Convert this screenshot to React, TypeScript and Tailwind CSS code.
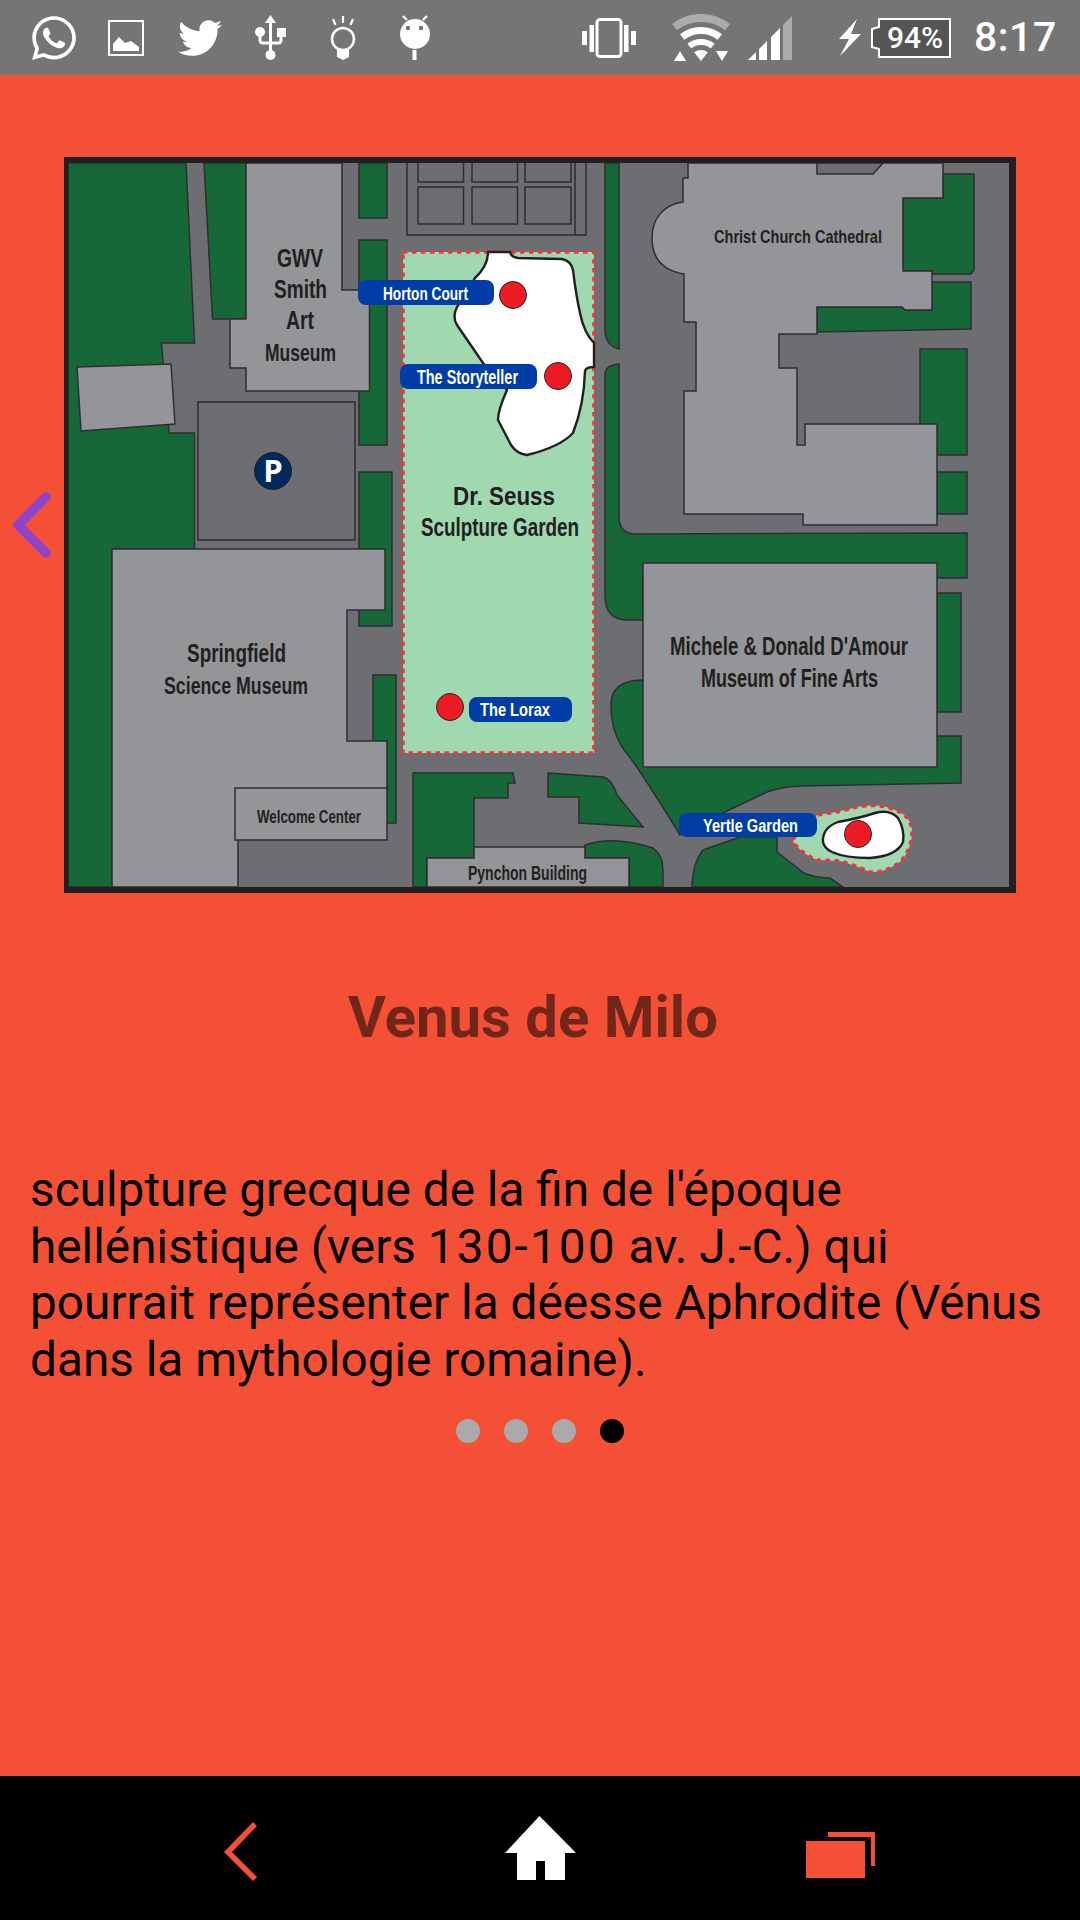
import { FaTwitter, FaWhatsapp } from "react-icons/fa";

const GREEN = "#176838";
const BUILDING = "#939598";
const LINE = "#2f2d31";

const MapText = ({ x, w, y, size, fill = "#231f20", children }: { x: number; w: number; y: number; size: number; fill?: string; children: string }) => (
  <text x={x} y={y} fontSize={size} fontWeight="700" fill={fill} fontFamily="'Liberation Sans', sans-serif" textLength={w} lengthAdjust="spacingAndGlyphs">
    {children}
  </text>
);

const Pill = ({ x, y, w, h }: { x: number; y: number; w: number; h: number }) => <rect x={x} y={y} width={w} height={h} rx={8} fill="#003da6" />;

const Dot = ({ x, y }: { x: number; y: number }) => <circle cx={x} cy={y} r={13.5} fill="#ed1c24" stroke="#231f20" strokeWidth={1} />;

const CampusMap = () => (
  <svg viewBox="64 157 952 736" className="block w-[952px] h-[736px] ml-[64px]">
    <rect x={64} y={157} width={952} height={736} fill="#6d6e71" />
    <g fill={GREEN} stroke={LINE} strokeWidth={1.5}>
      <path d="M68 163L186 163L194.5 343L161.5 343L169 433L194.5 433L194.5 549L112 549L112 887L68 887Z" />
      <path d="M204 163L212.5 319L246 319L246 163Z" />
      <rect x={359} y={163} width={28} height={55} />
      <rect x={359} y={240} width={28} height={205} />
      <rect x={359} y={472} width={33} height={154} />
      <rect x={373} y={675} width={23} height={148} />
      <path d="M413 773L513 773L515 783L508 783L508 798L474 798L474 858L427 858L427 887L413 887Z" />
      <path d="M548 773L603 777Q612 779 617 795L643 827L579 823L579 797L548 797Z" />
      <path d="M585 845Q613 835 653 848Q663 855 663 870L663 887L629 887L629 858L585 858Z" />
      <path d="M605 163L619 163L619 349Q605 345 605 330Z" />
      <path d="M605 375Q605 365 619 364L619 517Q619 534 636 534L967 533L967 578L900 578L643 578L643 620L627 620Q605 620 605 595Z" />
      <path d="M643 680Q611 680 611 705Q611 735 628 755Q640 770 680 835L725 812L767 792Q780 787 800 786L961 783L961 736L900 736L900 680Z" />
      <rect x={937} y={593} width={24} height={119} />
      <path d="M692 887Q693 862 703 850L740 837L777 837L777 852L800 870Q807 877 830 878L843 887Z" />
      <path d="M943 174L974 174L974 270L971 274L932 274L932 271L903 271L903 198L943 198Z" />
      <path d="M932 282L971 282L971 329L817 332L817 307L902 307L905 310L932 310Z" />
      <rect x={920} y={349} width={47} height={106} />
      <rect x={937} y={472} width={30} height={42} />
    </g>
    <g fill={BUILDING} stroke={LINE} strokeWidth={1.5}>
      <path d="M246 163L342 163L342 290L369.5 290L369.5 391L246 391L246 368L230 368L230 319L246 319Z" />
      <path d="M77 367L171 364L175 424L81 431Z" />
      <path d="M112 549L385 549L385 610L347 610L347 741L387 741L387 790L238 790L238 887L112 887Z" />
      <rect x={235} y={788} width={152} height={52} />
      <path d="M474 847L585 847L585 858L629 858L629 887L427 887L427 858L474 858Z" />
      <rect x={643} y={563} width={294} height={204} />
      <path d="M688 163L943 163L943 198L903 198L903 271L932 271L932 310L905 310L902 307L817 307L817 334L779 334L779 368L797 368L797 445L805 445L805 424L937 424L937 525L803 525L803 514L684 514L684 391L696 391L696 322L684 322L684 274C660 270 652 255 652 238C652 220 662 205 683 202L683 178L688 178Z" />
    </g>
    <g fill="#6d6e71" stroke={LINE} strokeWidth={1.5}>
      <path d="M817 163L817 174L873 174L883 163Z" />
      <rect x={198} y={402} width={157} height={138} />
      <rect x={407} y={157} width={179} height={78} />
      <path d="M575 157L575 235" fill="none" />
      <rect x={418} y={157} width={45.5} height={25} />
      <rect x={472} y={157} width={45.5} height={25} />
      <rect x={525} y={157} width={46} height={25} />
      <rect x={418} y={187} width={45.5} height={37} />
      <rect x={472} y={187} width={45.5} height={37} />
      <rect x={525} y={187} width={46} height={37} />
    </g>
    <circle cx={273} cy={471} r={18.5} fill="#002a5c" stroke="#231f20" strokeWidth={1} />
    <text x={273} y={482} textAnchor="middle" fontSize={31} fontWeight="700" fill="#ffffff" fontFamily="'Open Sans', sans-serif">P</text>

    <rect x={403} y={252} width={191} height={501} fill="#a0d9b0" stroke="#ef3340" strokeWidth={3.5} strokeDasharray="4.5 4.5" />
    <path d="M488 252L510 252Q511 257 518 258L562 259Q571 261 573 270Q576 295 580 313Q584 333 594 343L594 367Q586 367 585 371Q584 405 573 433Q560 447 527 455Q517 454 511 445L498 420Q498 410 507 390L483 363L457 325Q452 317 457 307L475 278Q488 266 488 252Z" fill="#ffffff" stroke="#231f20" strokeWidth={2.4} />
    <path d="M792 840L817 815Q840 812 857 807Q880 803 895 810Q910 815 912 830Q912 850 900 862Q885 873 870 872Q855 865 840 861L817 860Q800 853 792 840Z" fill="#a0d9b0" stroke="#ef3340" strokeWidth={3.5} strokeDasharray="4.5 4.5" />
    <path d="M823 842Q822 828 838 822Q860 818 875 813Q890 809 898 818Q905 830 903 842Q897 856 870 858Q845 858 832 852Q824 848 823 842Z" fill="#ffffff" stroke="#231f20" strokeWidth={2.4} />

    <Pill x={358} y={280} w={136} h={25} />
    <Pill x={400} y={364} w={137} h={25} />
    <Pill x={469} y={697} w={103} h={25} />
    <Pill x={679} y={813} w={138} h={24} />
    <Dot x={513} y={295} />
    <Dot x={558} y={376} />
    <Dot x={450} y={707} />
    <Dot x={858} y={834} />

    <MapText x={383} w={85} y={300} size={18} fill="#ffffff">Horton Court</MapText>
    <MapText x={417} w={101} y={384} size={20} fill="#ffffff">The Storyteller</MapText>
    <MapText x={480} w={70} y={716} size={19} fill="#ffffff">The Lorax</MapText>
    <MapText x={703} w={95} y={832} size={18} fill="#ffffff">Yertle Garden</MapText>

    <MapText x={277} w={46} y={267} size={25}>GWV</MapText>
    <MapText x={274} w={53} y={298} size={25}>Smith</MapText>
    <MapText x={286} w={28} y={329} size={25}>Art</MapText>
    <MapText x={265} w={71} y={361} size={23}>Museum</MapText>
    <MapText x={453} w={102} y={505} size={26}>Dr. Seuss</MapText>
    <MapText x={421} w={158} y={536} size={26}>Sculpture Garden</MapText>
    <MapText x={714} w={168} y={243} size={19}>Christ Church Cathedral</MapText>
    <MapText x={187} w={99} y={662} size={25}>Springfield</MapText>
    <MapText x={164} w={144} y={694} size={24}>Science Museum</MapText>
    <MapText x={257} w={104} y={823} size={18}>Welcome Center</MapText>
    <MapText x={468} w={119} y={880} size={21}>Pynchon Building</MapText>
    <MapText x={670} w={238} y={655} size={25}>Michele &amp; Donald D'Amour</MapText>
    <MapText x={701} w={177} y={687} size={25}>Museum of Fine Arts</MapText>

    <path d="M64 157H1016V893H64ZM68.5 163V887H1009V163Z" fill="#231f20" fillRule="evenodd" />
  </svg>
);

const StatusBar = () => (
  <div className="h-[75px] shrink-0 bg-[#757575] flex items-center text-white">
    <FaWhatsapp className="ml-[29px] w-[50px] h-[50px]" />
    <svg width="36" height="36" viewBox="0 0 36 36" className="ml-[29px]">
      <rect x="1" y="1" width="34" height="34" fill="none" stroke="#fff" strokeWidth="2" />
      <path d="M5 31V24L11 17L17 23L23 21L31 27V31Z" fill="#fff" />
    </svg>
    <FaTwitter className="ml-[34px] w-[44px] h-[44px]" />
    <svg width="31" height="45" viewBox="0 0 31 45" className="ml-[33px]" fill="#fff">
      <path d="M15.5 0L21 8H10Z" />
      <rect x="14" y="8" width="3" height="30" />
      <circle cx="15.5" cy="40" r="5" />
      <circle cx="5" cy="17" r="5" />
      <rect x="22" y="13" width="9" height="9" />
      <path d="M5 20V25Q5 28 8 28H23Q26 28 26 25V21" fill="none" stroke="#fff" strokeWidth="3" />
    </svg>
    <svg width="26" height="44" viewBox="0 0 26 44" className="ml-[44px]" fill="#fff">
      <path d="M13 0V7M3 3L5.5 9M23 3L20.5 9" stroke="#fff" strokeWidth="2.2" />
      <circle cx="13" cy="23" r="11" fill="none" stroke="#fff" strokeWidth="2.5" />
      <path d="M7 33H19V41L13 44L7 41Z" />
    </svg>
    <svg width="30" height="45" viewBox="0 0 30 45" className="ml-[44px]" fill="#fff">
      <path d="M3 1L7 5M27 1L23 5" stroke="#fff" strokeWidth="2.2" />
      <circle cx="15" cy="19" r="15" />
      <circle cx="8" cy="13" r="2.2" fill="#757575" />
      <circle cx="21" cy="13" r="2.2" fill="#757575" />
      <rect x="12.5" y="35" width="4" height="10" />
    </svg>

    <svg width="54" height="40" viewBox="0 0 54 40" className="ml-[152px]" fill="#fff">
      <rect x="15" y="1.5" width="24" height="37" rx="3" fill="none" stroke="#fff" strokeWidth="3" />
      <rect x="0" y="13" width="5" height="14" />
      <rect x="7.5" y="7" width="4.5" height="27" />
      <rect x="42" y="7" width="4.5" height="27" />
      <rect x="49" y="13" width="5" height="14" />
    </svg>
    <svg width="58" height="47" viewBox="0 0 58 47" className="ml-[36px]" fill="none">
      <path d="M2.5 13.1A43 43 0 0 1 55.5 13.1" stroke="#ababab" strokeWidth="8" />
      <path d="M10.2 23A30.5 30.5 0 0 1 47.8 23" stroke="#fff" strokeWidth="7" />
      <path d="M17.3 32A19 19 0 0 1 40.7 32" stroke="#fff" strokeWidth="6" />
      <path d="M29 47L22.2 38.3A11 11 0 0 1 35.8 38.3Z" fill="#fff" />
      <path d="M8 37L14 47H2Z M44 37H56L50 47Z" fill="#fff" />
    </svg>
    <svg width="44" height="44" viewBox="0 0 44 44" className="ml-[18px]">
      <path d="M0 44L8 36V44Z M11 33L19 25V44H11Z M23 21L32 12V44H23Z" fill="#fff" />
      <path d="M35 9L44 0V44H35Z" fill="#ababab" />
    </svg>
    <svg width="22" height="37" viewBox="0 0 22 37" className="ml-[47px]" fill="#fff">
      <path d="M18 0L0 20H10L1 37L22 15H12Z" />
    </svg>
    <svg width="80" height="40" viewBox="0 0 80 40" className="ml-[10px]">
      <path d="M8 1H79V39H8V31L1 29V11L8 9Z" fill="#555555" stroke="#fff" strokeWidth="2" />
      <text x="44" y="30" textAnchor="middle" fontSize="30" fontWeight="500" fill="#fff" fontFamily="Roboto, sans-serif">94%</text>
    </svg>
    <span className="ml-[23px] font-['Roboto',sans-serif] font-medium tracking-[0.5px] text-[41px] leading-none">8:17</span>
  </div>
);

const NavBar = () => (
  <div className="h-[144px] shrink-0 bg-black flex items-center justify-center">
    <div className="w-[300px] flex justify-center pt-[6px]">
      <svg width="33" height="59" viewBox="0 0 33 59" fill="#f45036">
        <path d="M0 30L29 0L33 4L8 30L33 55L29 59Z" />
      </svg>
    </div>
    <div className="w-[300px] flex justify-center">
      <svg width="71" height="64" viewBox="0 0 71 64" fill="#ffffff">
        <path d="M34.5 0L71 37H60V64H40V45H31V64H12V37H0Z" />
      </svg>
    </div>
    <div className="w-[300px] flex justify-center pt-[14px]">
      <svg width="69" height="46" viewBox="0 0 69 46" fill="#f45036">
        <path d="M22 0H69V34H65V5H22Z" />
        <rect x="0" y="9" width="59" height="37" />
      </svg>
    </div>
  </div>
);

export default function App() {
  return (
    <div className="relative w-[1080px] h-[1920px] flex flex-col bg-[#f45036] font-['Roboto',sans-serif] overflow-hidden">
      <StatusBar />
      <main className="flex-1 pt-[82px]">
        <CampusMap />
        <h1 className="mt-[92px] pr-[14px] text-center text-[58px] leading-[64px] font-bold text-[#72261a]">Venus de Milo</h1>
        <p className="mt-[113px] px-[30px] text-[47.75px] leading-[56.7px] text-black">
          sculpture grecque de la fin de l'époque hellénistique (vers <span className="tracking-[2.1px]">130-100</span> av. J.-C.) qui pourrait représenter la déesse Aphrodite (Vénus dans la mythologie romaine).
        </p>
        <div className="mt-[30px] flex justify-center gap-[24px]">
          <span className="w-[24px] h-[24px] rounded-full bg-[#aaaaaa]" />
          <span className="w-[24px] h-[24px] rounded-full bg-[#aaaaaa]" />
          <span className="w-[24px] h-[24px] rounded-full bg-[#aaaaaa]" />
          <span className="w-[24px] h-[24px] rounded-full bg-black" />
        </div>
      </main>
      <NavBar />
      <svg width="46" height="74" viewBox="0 0 46 74" className="absolute left-[11px] top-[488px]" fill="none">
        <path d="M35 9L7 37L35 65" stroke="#8e44c8" strokeWidth="9.5" strokeLinecap="round" strokeLinejoin="round" />
      </svg>
    </div>
  );
}
